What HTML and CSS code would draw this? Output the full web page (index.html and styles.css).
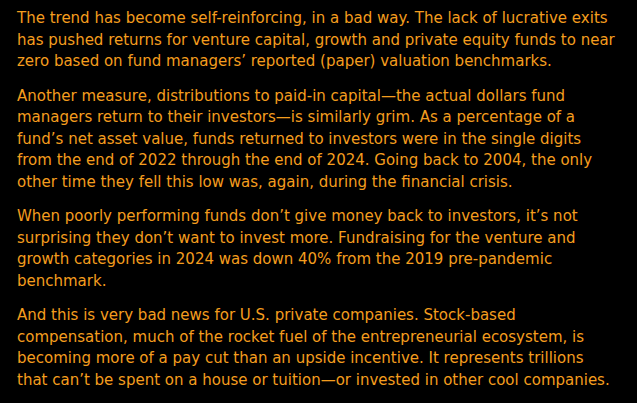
FILE: index.html
```html
<!DOCTYPE html>
<html lang="en">
<head>
<meta charset="utf-8">
<link rel="stylesheet" href="styles.css">
</head>
<body>
<main class="article">
<p>The trend has become self-reinforcing, in a bad way. The lack of lucrative exits has pushed returns for venture capital, growth and private equity funds to near zero based on fund managers’ reported (paper) valuation benchmarks.</p>
<p>Another measure, distributions to paid-in capital—the actual dollars fund managers return to their investors—is similarly grim. As a percentage of a fund’s net asset value, funds returned to investors were in the single digits from the end of 2022 through the end of 2024. Going back to 2004, the only other time they fell this low was, again, during the financial crisis.</p>
<p>When poorly performing funds don’t give money back to investors, it’s not surprising they don’t want to invest more. Fundraising for the venture and growth categories in 2024 was down 40% from the 2019 pre-pandemic benchmark.</p>
<p>And this is very bad news for U.S. private companies. Stock-based compensation, much of the rocket fuel of the entrepreneurial ecosystem, is becoming more of a pay cut than an upside incentive. It represents trillions that can’t be spent on a house or tuition—or invested in other cool companies.</p>
</main>
</body>
</html>
```
FILE: styles.css
```css
html, body {
  margin: 0;
  background: #000;
}
.article {
  padding: 8px 17px 0 17px;
  width: 598px;
  color: #f49d1e;
  font-family: "DejaVu Sans", sans-serif;
  font-size: 15px;
  line-height: 21.5px;
}
.article p {
  margin: 0 0 13px 0;
}
```
